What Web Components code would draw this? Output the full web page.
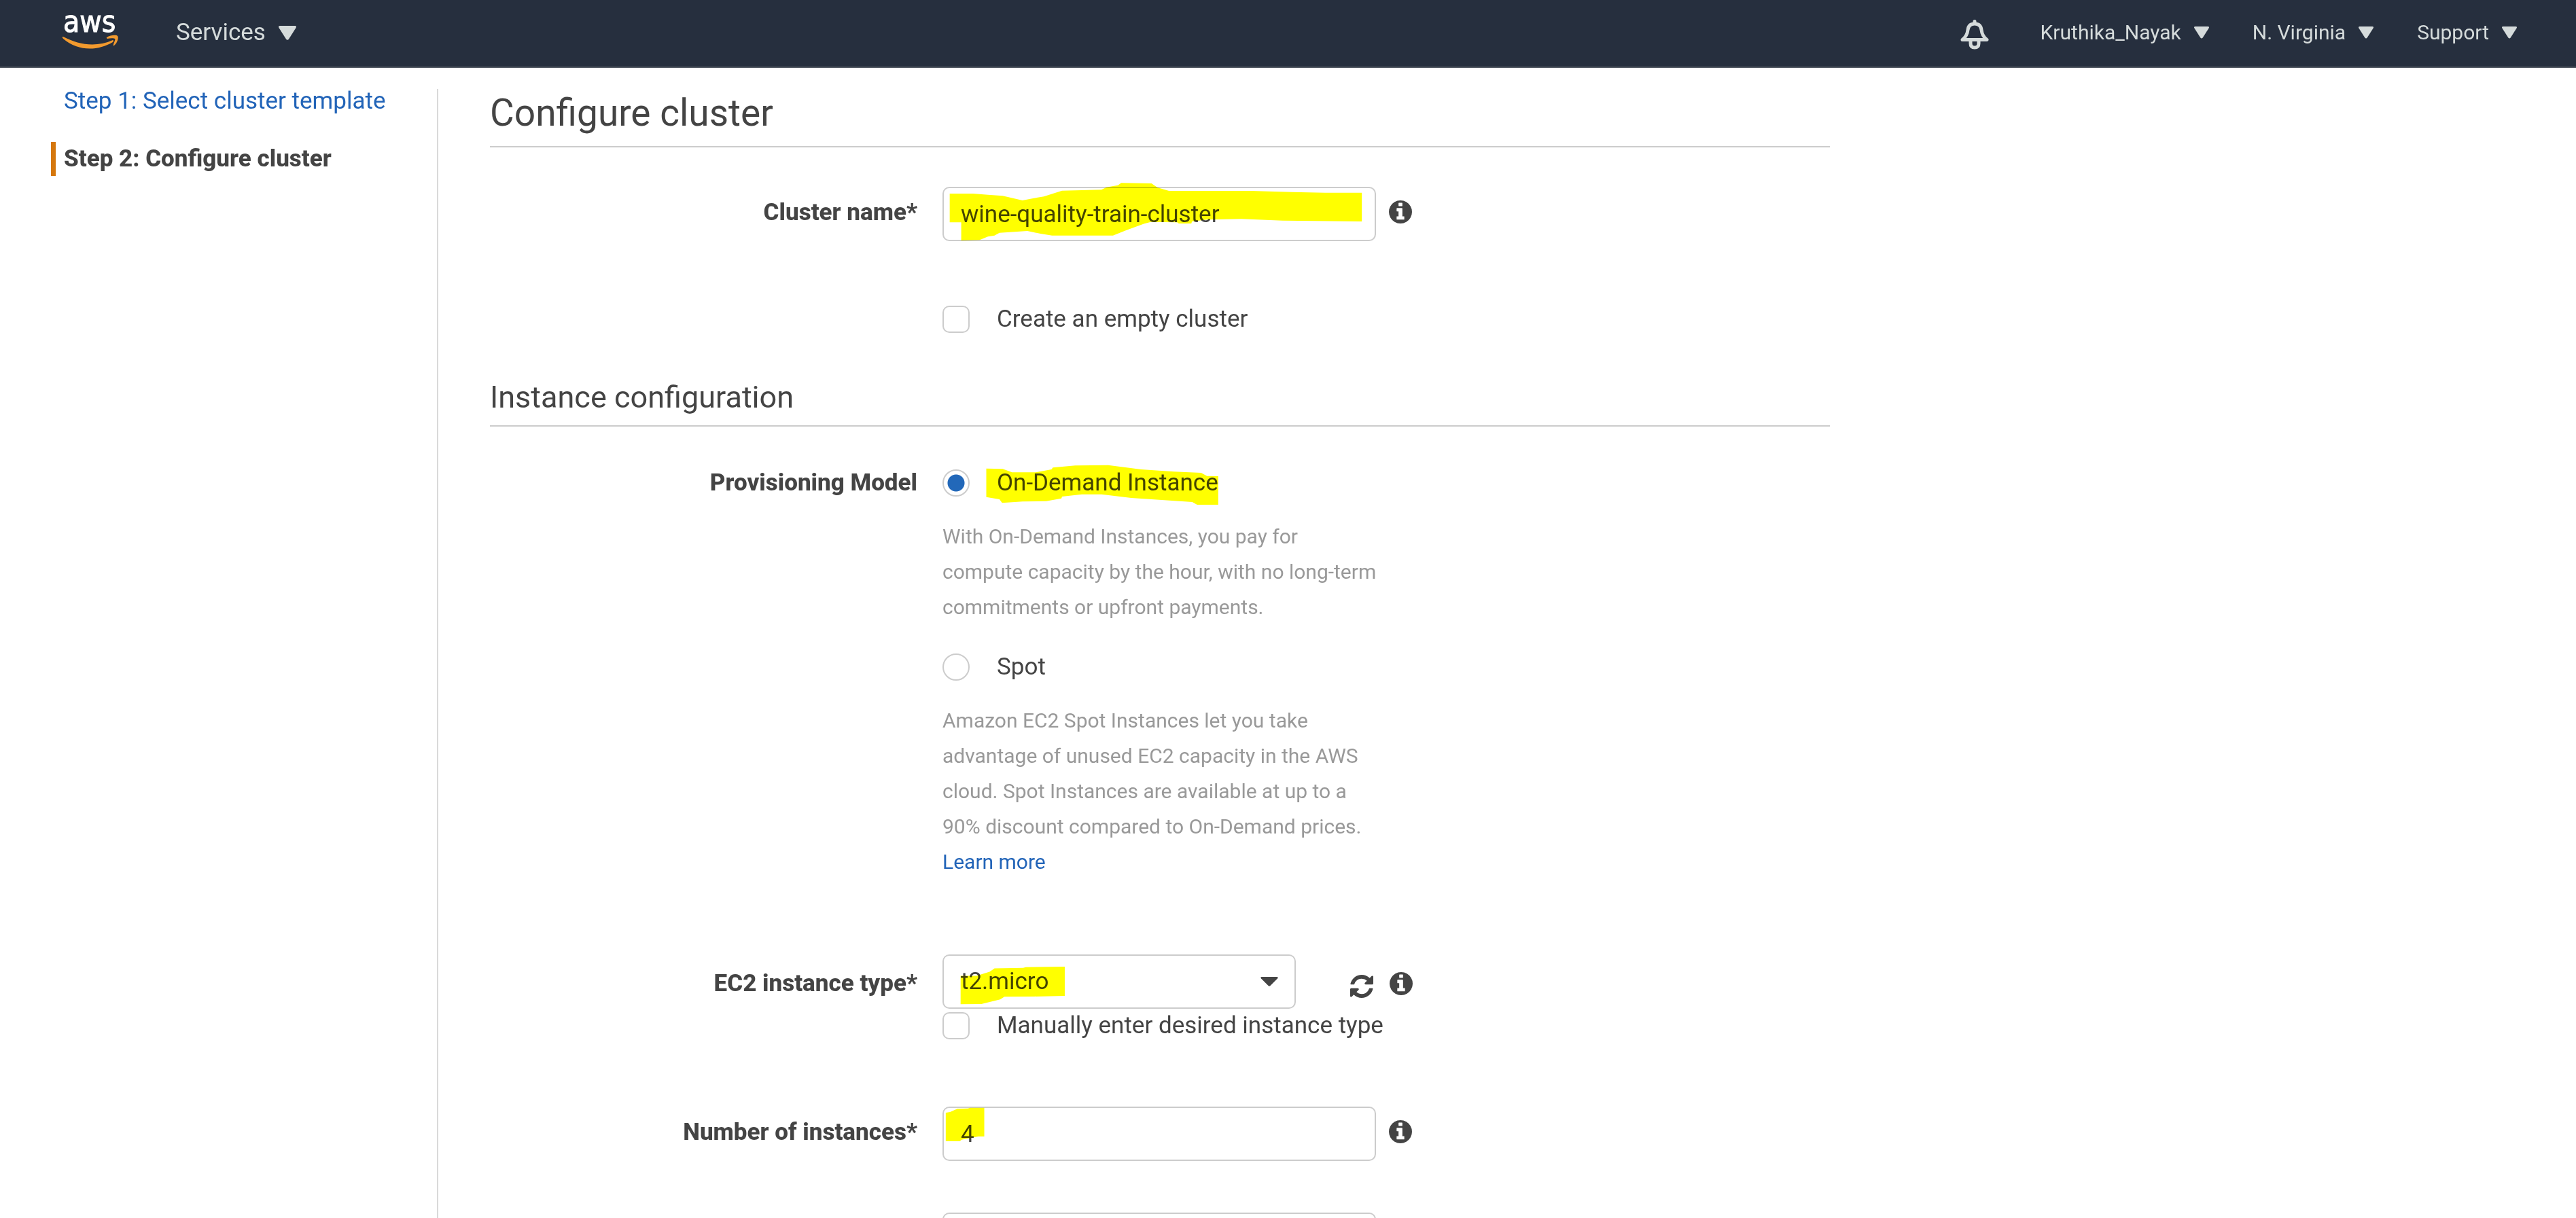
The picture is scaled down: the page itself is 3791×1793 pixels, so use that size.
<!DOCTYPE html>
<html lang="en">
<head>
<meta charset="utf-8">
<title>Configure cluster</title>
<style>
  body { margin: 0; background: #fff; color: #444; font: 35px/50px Roboto, "Liberation Sans", sans-serif; }
</style>
</head>
<body>
<ecs-app></ecs-app>

<script>
const INFO = `<svg viewBox="128 128 1536 1536" width="34" height="34" fill="#444" aria-hidden="true"><path d="M1152 1376v-160q0-14-9-23t-23-9h-96V672q0-14-9-23t-23-9H672q-14 0-23 9t-9 23v160q0 14 9 23t23 9h96v320h-96q-14 0-23 9t-9 23v160q0 14 9 23t23 9h448q14 0 23-9t9-23zM1024 480V320q0-14-9-23t-23-9H800q-14 0-23 9t-9 23v160q0 14 9 23t23 9h192q14 0 23-9t9-23zm640 416q0 209-103 385.5T1281.5 1561 896 1664t-385.5-103T231 1281.5 128 896t103-385.5T510.5 231 896 128t385.5 103T1561 510.5 1664 896z"/></svg>`;
const REFRESH = `<svg viewBox="0 0 1536 1536" width="34" height="34" fill="#444" aria-hidden="true"><path d="M1511 928q0 5-1 7-64 268-268 434.5T764 1536q-146 0-282.5-55T238 1324l-129 129q-19 19-45 19t-45-19-19-45V960q0-26 19-45t45-19h448q26 0 45 19t19 45-19 45l-137 137q71 66 161 102t187 36q134 0 250-65t186-179q11-17 53-117 8-23 30-23h192q13 0 22.5 9.5t9.5 22.5zm25-800v448q0 26-19 45t-45 19h-448q-26 0-45-19t-19-45 19-45l138-138Q969 256 768 256q-134 0-250 65T332 500q-11 17-53 117-8 23-30 23H50q-13 0-22.5-9.5T18 608v-7q65-268 270-434.5T768 0q146 0 284 55.5T1297 212l130-129q19-19 45-19t45 19 19 45z"/></svg>`;

/* Highlighter strokes, each drawn in the box of the control it marks. */
const MARKS = {
  name: ['77 105 1317 240', '99,135 170,135 215,140 260,145 300,158 320,165 355,155 385,148 440,122 560,118 575,107 610,98 620,88 712,90 730,108 765,123 1015,123 1140,128 1240,131 1351,131 1351,258 1210,256 1110,254 985,247 880,250 835,258 833,267 795,267 790,262 710,260 690,268 635,297 595,320 410,320 375,312 335,300 250,308 235,320 215,325 190,340 134,342 134,262 99,262'],
  demand: ['77 150 825 120', '210,146 260,148 288,163 360,163 408,150 412,142 480,133 580,131 680,150 780,160 862,165 880,179 914,180 914,306 850,306 835,294 650,276 560,260 500,260 440,270 438,278 392,290 320,292 258,298 250,282 210,272'],
  type: ['77 102 1072 239', '132,196 180,196 220,178 235,163 322,161 330,158 448,156 448,284 355,287 265,288 252,300 195,320 132,321'],
  count: ['77 84 1317 240', '87,111 100,108 122,94 155,92 160,89 204,89 204,216 186,216 172,220 135,230 130,237 87,237']
};
const mark = k => MARKS[k] ? `<svg class="mark" viewBox="${MARKS[k][0]}" preserveAspectRatio="none" aria-hidden="true"><polygon fill="#ff0" points="${MARKS[k][1]}"/></svg>` : '';

const BASE = `
  *, *::before, *::after { box-sizing: border-box; }
  :host { display: block; }
  a { color: #2264b8; text-decoration: none; }
  svg { display: block; flex: none; }
  button { margin: 0; padding: 0; border: 0; background: none; color: inherit; font: inherit; cursor: pointer; }
`;
const ROW = `
  .row { display: grid; grid-template-columns: 629px minmax(0, 1fr); column-gap: 37px; }
  .label { font-weight: 800; text-align: right; padding-top: var(--label-top, 0); }
  .line { display: flex; align-items: flex-start; }
  .box { position: relative; display: block; width: 638px; height: 80px; }
  .mark { position: absolute; inset: 0; width: 100%; height: 100%; overflow: visible; mix-blend-mode: multiply; pointer-events: none; }
  input.text, select { display: block; width: 100%; height: 80px; margin: 0; padding: 0 25px; border: 2px solid #ccc; border-radius: 10px;
    background: #fff; color: #444; font: inherit; appearance: none; outline: 0; }
  .info { margin: 20px 0 0 19px; }
  .choice { display: flex; align-items: center; height: 50px; white-space: nowrap; }
  .choice .control { position: relative; display: flex; align-items: center; width: 400px; gap: 40px; height: 40px; }
  .choice input { flex: none; width: 40px; height: 40px; margin: 0; border: 2px solid #ccc; background: #fff; appearance: none; }
  .choice input[type=checkbox] { border-radius: 10px; }
  .choice input[type=radio] { border-radius: 50%; }
  .choice input[type=radio]:checked { background: radial-gradient(circle, #2268b9 12px, #fff 13px); }
`;

function define(name, css, html) {
  customElements.define(name, class extends HTMLElement {
    connectedCallback() {
      if (this.shadowRoot) return;
      this.attachShadow({ mode: 'open' }).innerHTML =
        `<style>${BASE}${css}</style>` + (typeof html === 'function' ? html(this) : html);
    }
  });
}

define('nav-menu', `
  button { display: flex; align-items: center; gap: 19px; line-height: 50px; }
  svg { width: var(--arrow, 22px); height: auto; }
`, `<button type="button"><slot></slot><svg viewBox="0 0 26 21" fill="#d5dbdb" aria-hidden="true"><path d="M2 0H24Q27 0 25.500 3L15 19.500Q13 22 11 19.500L.5 3Q-1 0 2 0Z"/></svg></button>`);

define('aws-header', `
  header { display: flex; align-items: center; height: 100px; padding: 0 87px 2px 91px; background: #262f3e; border-bottom: 2px solid #545b64; color: #d5dbdb; }
  .logo { margin-right: 84px; }
  .services { --arrow: 26px; }
  .right { display: flex; align-items: center; gap: 64px; margin-left: auto; font-size: 30px; }
  .bell { margin-right: 12px; }
  .bell svg { margin-top: 6px; }
`, `
  <header>
    <a class="logo" href="#" aria-label="AWS home"><svg width="84" height="88" viewBox="0 -17 84 88">
      <text x="2" y="26" fill="#fff" stroke="#fff" stroke-width="1" font-family="DejaVu Sans Condensed, Open Sans, sans-serif" font-size="44">aws</text>
      <path fill="#f29a2e" d="M1 33Q0 34 2 36C24 55 53 54 75 41Q77 39 75 38C50 49 25 45 2 33Z"/>
      <path fill="#f29a2e" d="M66 34C72 30 81 30 82 32C84 34 82 42 77 46Q75 47 76 44C78 39 79 37 78 36C77 35 71 35 67 36Q65 35 66 34Z"/>
    </svg></a>
    <nav-menu class="services">Services</nav-menu>
    <div class="right">
      <button class="bell" type="button" aria-label="Notifications"><svg width="42" height="44" viewBox="0 0 42 44" fill="none" stroke="#d5dbdb" stroke-linejoin="round" stroke-linecap="round">
        <path stroke-width="5" d="M21 2.500V5M3 29.500Q10 24 11 15Q12 6 21 6T31 15Q32 24 39 29.500Z"/>
        <path stroke-width="5" d="M15 31V35Q15 41 21 41T27 35V31"/>
      </svg></button>
      <nav-menu>Kruthika_Nayak</nav-menu>
      <nav-menu>N. Virginia</nav-menu>
      <nav-menu>Support</nav-menu>
    </div>
  </header>`);

define('wizard-steps', `
  ol { display: flex; flex-direction: column; gap: 35px; margin: 0; padding: 24px 0 0 75px; list-style: none; }
  li { border-left: 7px solid transparent; padding-left: 12px; }
  li[aria-current] { border-color: #d5770d; font-weight: 800; }
`, `<ol><li><a href="#">Step 1: Select cluster template</a></li><li aria-current="step">Step 2: Configure cluster</li></ol>`);

define('form-heading', `
  h1, h2 { margin: 0; border-bottom: 2px solid #ccc; font-weight: 400; }
  h1 { font-size: 55px; line-height: 70px; padding-bottom: 14px; }
  h2 { font-size: 45px; line-height: 60px; padding-bottom: 11px; }
`, el => { const h = el.getAttribute('level'); return `<h${h}><slot></slot></h${h}>`; });

define('text-row', ROW + `:host { --label-top: 13px; }`, el => {
  const label = el.getAttribute('label');
  return `<div class="row">
    ${label ? `<label class="label" for="field">${label}</label>` : '<span></span>'}
    <div class="line"><div class="box"><input class="text" id="field" type="text" value="${el.getAttribute('value') || ''}"${label ? '' : ' aria-label="Next setting"'}>${mark(el.getAttribute('mark'))}</div>
    ${label ? `<button class="info" type="button" aria-label="About ${label}">${INFO}</button>` : ''}</div>
  </div>`;
});

define('check-row', ROW, `<div class="row"><span></span><label class="choice"><span class="control"><input type="checkbox"><slot></slot></span></label></div>`);

define('provisioning-model', ROW + `
  fieldset { margin: 0; padding: 0; border: 0; min-width: 0; }
  p { width: 640px; margin: 28px 0 37px; color: #999; font-size: 30px; line-height: 52px; }
  p:last-child { margin-bottom: 0; }
`, `<div class="row">
    <span class="label" id="model">Provisioning Model</span>
    <fieldset aria-labelledby="model">
      <label class="choice"><span class="control"><input type="radio" name="model" checked>On-Demand Instance${mark('demand')}</span></label>
      <p>With On-Demand Instances, you pay for compute capacity by the hour, with no long-term commitments or upfront payments.</p>
      <label class="choice"><span class="control"><input type="radio" name="model">Spot</span></label>
      <p>Amazon EC2 Spot Instances let you take advantage of unused EC2 capacity in the AWS cloud. Spot Instances are available at up to a 90% discount compared to On-Demand prices. <a href="#">Learn more</a></p>
    </fieldset>
  </div>`);

define('instance-type', ROW + `
  :host { --label-top: 18px; }
  .box { width: 520px; }
  .arrow { position: absolute; right: 26px; top: 33px; pointer-events: none; }
  .refresh { margin: 30px 0 0 80px; }
  .info { margin: 26px 0 0 24px; }
`, `<div class="row">
    <label class="label" for="type">EC2 instance type*</label>
    <div class="line">
      <div class="box"><select id="type"><option>t2.micro</option></select>
        <svg class="arrow" width="26" height="14" viewBox="0 0 26 14" fill="#444" aria-hidden="true"><path d="M1.500 0H24.500Q26.500 .5 25 2.500L14.500 13Q13 14.500 11.500 13L1 2.500Q-.5 .5 1.500 0Z"/></svg>
        ${mark('type')}</div>
      <button class="refresh" type="button" aria-label="Refresh instance types">${REFRESH}</button>
      <button class="info" type="button" aria-label="About EC2 instance type">${INFO}</button>
    </div>
  </div>`);

define('ecs-app', `
  .page { display: flex; flex-direction: column; height: 100vh; overflow: hidden; }
  aws-header { flex: none; }
  .body { display: grid; grid-template-columns: 643px minmax(0, 1fr); flex: 1; min-height: 0; }
  main { margin-top: 31px; border-left: 2px solid #d9d9d9; padding-left: 76px; }
  form { display: flex; flex-direction: column; max-width: 1972px; }
  form > * { flex: none; }
  .name { margin-top: 58px; }
  .empty { margin-top: 90px; }
  .section { margin-top: 60px; }
  .model { margin-top: 58px; }
  .type { margin-top: 110px; }
  .count { margin-top: 94px; }
  .next { margin-top: 76px; }
`, `<div class="page">
    <aws-header></aws-header>
    <div class="body">
      <wizard-steps></wizard-steps>
      <main><form>
        <form-heading level="1">Configure cluster</form-heading>
        <text-row class="name" label="Cluster name*" value="wine-quality-train-cluster" mark="name"></text-row>
        <check-row class="empty">Create an empty cluster</check-row>
        <form-heading class="section" level="2">Instance configuration</form-heading>
        <provisioning-model class="model"></provisioning-model>
        <instance-type class="type"></instance-type>
        <check-row>Manually enter desired instance type</check-row>
        <text-row class="count" label="Number of instances*" value="4" mark="count"></text-row>
        <text-row class="next"></text-row>
      </form></main>
    </div>
  </div>`);
</script>
</body>
</html>
